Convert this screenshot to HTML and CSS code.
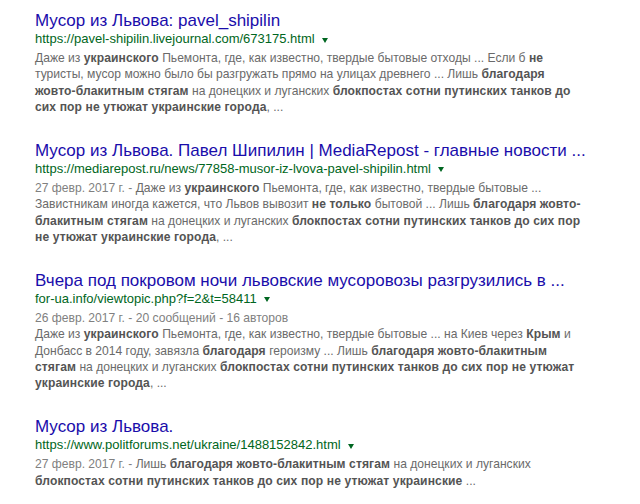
FILE: index.html
```html
<!DOCTYPE html>
<html lang="ru">
<head>
<meta charset="utf-8">
<link rel="stylesheet" href="styles.css">
</head>
<body>
<div class="results">
  <div class="result">
    <a class="title">Мусор из Львова: pavel_shipilin</a>
    <div class="url">https://pavel-shipilin.livejournal.com/673175.html<span class="arrow"></span></div>
    <div class="snippet">Даже из <b>украинского</b> Пьемонта, где, как известно, твердые бытовые отходы ... Если б <b>не</b><br>туристы, мусор можно было бы разгружать прямо на улицах древнего ... Лишь <b>благодаря</b><br><b>жовто-блакитным стягам</b> на донецких и луганских <b>блокпостах сотни путинских танков до</b><br><b>сих пор не утюжат украинские города</b>, ...</div>
  </div>
  <div class="result">
    <a class="title">Мусор из Львова. Павел Шипилин | MediaRepost - главные новости ...</a>
    <div class="url">https://mediarepost.ru/news/77858-musor-iz-lvova-pavel-shipilin.html<span class="arrow"></span></div>
    <div class="snippet"><span class="date">27 февр. 2017 г. - </span>Даже из <b>украинского</b> Пьемонта, где, как известно, твердые бытовые ...<br>Завистникам иногда кажется, что Львов вывозит <b>не только</b> бытовой ... Лишь <b>благодаря жовто-</b><br><b>блакитным стягам</b> на донецких и луганских <b>блокпостах сотни путинских танков до сих пор</b><br><b>не утюжат украинские города</b>, ...</div>
  </div>
  <div class="result">
    <a class="title">Вчера под покровом ночи львовские мусоровозы разгрузились в ...</a>
    <div class="url">for-ua.info/viewtopic.php?f=2&amp;t=58411<span class="arrow"></span></div>
    <div class="snippet"><span class="date">26 февр. 2017 г. - 20 сообщений - 16 авторов</span><br>Даже из <b>украинского</b> Пьемонта, где, как известно, твердые бытовые ... на Киев через <b>Крым</b> и<br>Донбасс в 2014 году, завязла <b>благодаря</b> героизму ... Лишь <b>благодаря жовто-блакитным</b><br><b>стягам</b> на донецких и луганских <b>блокпостах сотни путинских танков до сих пор не утюжат</b><br><b>украинские города</b>, ...</div>
  </div>
  <div class="result">
    <a class="title">Мусор из Львова.</a>
    <div class="url">https://www.politforums.net/ukraine/1488152842.html<span class="arrow"></span></div>
    <div class="snippet"><span class="date">27 февр. 2017 г. - </span>Лишь <b>благодаря жовто-блакитным стягам</b> на донецких и луганских<br><b>блокпостах сотни путинских танков до сих пор не утюжат украинские</b> ...</div>
  </div>
</div>
</body>
</html>
```
FILE: styles.css
```css
html, body {
  margin: 0;
  padding: 0;
  background: #ffffff;
}
body {
  font-family: "Liberation Sans", Arial, sans-serif;
}
.results {
  padding: 11px 0 0 35px;
  display: flex;
  flex-direction: column;
  gap: 25.8px;
}
.result {
  display: flex;
  flex-direction: column;
}
.title {
  font-size: 17px;
  line-height: 20px;
  color: #1a0dab;
  white-space: nowrap;
}
.url {
  font-size: 13px;
  line-height: 16px;
  color: #006621;
  margin-bottom: 3px;
  white-space: nowrap;
  display: flex;
  align-items: center;
}
.arrow {
  display: inline-block;
  width: 0;
  height: 0;
  margin-left: 7px;
  margin-top: 2px;
  border-left: 3px solid transparent;
  border-right: 3px solid transparent;
  border-top: 5px solid #006621;
}
.snippet {
  font-size: 12.1px;
  line-height: 16.3px;
  color: #6a6a6a;
  white-space: nowrap;
}
.snippet b {
  color: #545454;
  font-weight: bold;
  letter-spacing: 0.1px;
}
.date {
  color: #808080;
}
```
